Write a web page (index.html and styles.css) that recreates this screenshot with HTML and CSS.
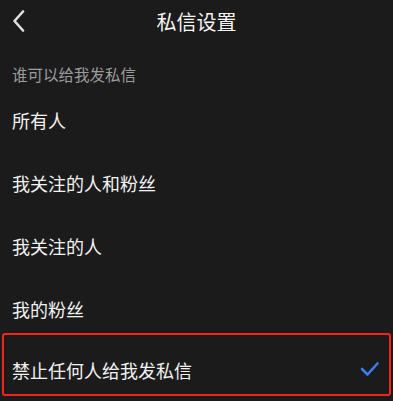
FILE: index.html
```html
<!DOCTYPE html>
<html lang="zh-CN">
<head>
  <meta charset="UTF-8" />
  <meta name="viewport" content="width=device-width, initial-scale=1.0"/>
  <title>私信设置</title>
  <link rel="stylesheet" href="styles.css">
</head>
<body>
  <header class="topbar">
    <button class="back" aria-label="返回">
      <svg width="14" height="22" viewBox="0 0 14 22">
        <polyline points="11,1.5 2.5,11 11,20.5" fill="none" stroke="#e0e0e0" stroke-width="2.6" stroke-linecap="round" stroke-linejoin="round"/>
      </svg>
    </button>
    <h1>私信设置</h1>
  </header>

  <p class="section-label">谁可以给我发私信</p>

  <ul class="options">
    <li>所有人</li>
    <li>我关注的人和粉丝</li>
    <li>我关注的人</li>
    <li>我的粉丝</li>
    <li class="checked">
      <span>禁止任何人给我发私信</span>
      <svg class="check" width="20" height="16" viewBox="0 0 20 16">
        <polyline points="2,8 7.5,13.5 17.5,2.5" fill="none" stroke="#3b7cf2" stroke-width="2.6" stroke-linecap="round" stroke-linejoin="round"/>
      </svg>
      <span class="highlight"></span>
    </li>
  </ul>
</body>
</html>
```

FILE: styles.css
```css
body {
  margin: 0;
  background: #1b1b1b;
  color: #f2f2f2;
  font-family: "Noto Sans CJK SC", "Noto Sans", sans-serif;
  height: 401px;
  overflow: hidden;
}

.topbar {
  height: 44px;
  display: flex;
  align-items: center;
  justify-content: center;
  position: relative;
}

.back {
  position: absolute;
  left: 12px;
  top: 10px;
  padding: 0;
  border: 0;
  background: none;
  display: flex;
}

.topbar h1 {
  margin: 0;
  font-size: 20px;
  font-weight: 400;
  line-height: 24px;
  color: #f5f5f5;
}

.section-label {
  margin: 0;
  padding: 20px 12px 4px;
  font-size: 15.5px;
  line-height: 20px;
  color: #9c9c9c;
}

.options {
  list-style: none;
  margin: 0;
  padding: 0;
}

.options li {
  height: 63px;
  padding: 0 12px;
  display: flex;
  align-items: center;
  justify-content: space-between;
  font-size: 18px;
  position: relative;
}

.check {
  margin-right: 1px;
  margin-top: -6px;
}

.checked span:first-child {
  margin-top: -3px;
}

.highlight {
  position: absolute;
  left: 2px;
  right: 2px;
  top: -7px;
  height: 63px;
  box-sizing: border-box;
  border: 2px solid #f4231c;
  border-radius: 3px;
}
```
